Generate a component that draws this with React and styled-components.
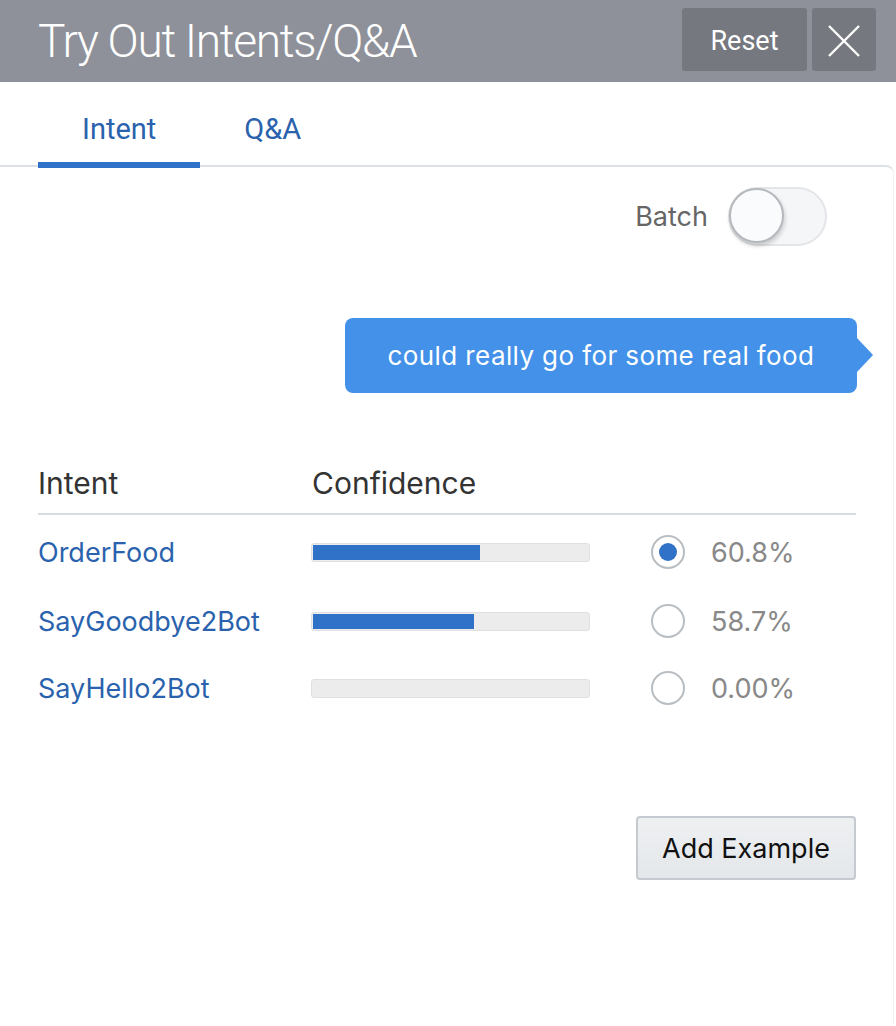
import React from 'react';
import styled, { createGlobalStyle } from 'styled-components';

const GlobalStyle = createGlobalStyle`
  html, body {
    margin: 0;
    padding: 0;
    background: #fff;
  }
  * {
    box-sizing: border-box;
  }
`;

const Page = styled.div`
  width: 896px;
  height: 1026px;
  background: #fff;
  font-family: 'Inter', 'Liberation Sans', sans-serif;
  overflow: hidden;
`;

const Header = styled.header`
  height: 82px;
  background: #8e9199;
  display: flex;
  align-items: flex-start;
  justify-content: space-between;
  padding: 8px 20px 0 38px;
`;

const Title = styled.h1`
  margin: 10px 0 0;
  font-family: 'Roboto', 'Liberation Sans', sans-serif;
  font-weight: 300;
  font-size: 46px;
  letter-spacing: -1.3px;
  color: #fff;
  line-height: 1;
`;

const HeaderActions = styled.div`
  display: flex;
  gap: 5px;
`;

const HeaderButton = styled.button`
  height: 63px;
  width: ${(p) => p.$width}px;
  border: none;
  border-radius: 3px;
  background: #76787f;
  color: #fff;
  font-family: 'Roboto', 'Liberation Sans', sans-serif;
  font-size: 27px;
  display: flex;
  align-items: center;
  justify-content: center;
  padding: 2px 0 0;
`;

const Tabs = styled.nav`
  display: flex;
  padding-left: 38px;
  height: 86px;
  align-items: flex-end;
  position: relative;
  z-index: 1;
`;

const Tab = styled.div`
  padding: 14px 44px 0;
  height: 86px;
  display: flex;
  align-items: center;
  font-family: 'Roboto', 'Liberation Sans', sans-serif;
  font-size: 29px;
  color: #2a62ad;
  border-bottom: 6px solid ${(p) => (p.$active ? '#2f72c8' : 'transparent')};
`;

const Panel = styled.section`
  margin-top: -3px;
  border-top: 2px solid #dde1e6;
  border-right: 1px solid #eef0f2;
  border-top-right-radius: 8px;
  margin-right: 2px;
  padding: 20px 38px 0 38px;
  height: 860px;
`;

const BatchRow = styled.div`
  display: flex;
  justify-content: flex-end;
  align-items: center;
  gap: 20px;
  padding-right: 28px;
`;

const BatchLabel = styled.span`
  font-size: 27px;
  color: #666;
`;

const Toggle = styled.div`
  width: 99px;
  height: 59px;
  border-radius: 30px;
  background: #f5f6f8;
  border: 2px solid #e3e5e8;
  position: relative;
`;

const Knob = styled.div`
  position: absolute;
  left: -1px;
  top: -1px;
  width: 55px;
  height: 55px;
  border-radius: 50%;
  background: #fafbfc;
  border: 2px solid #b5b9bd;
  box-shadow: 1px 3px 4px rgba(0, 0, 0, 0.18);
`;

const BubbleRow = styled.div`
  display: flex;
  justify-content: flex-end;
  margin-top: 72px;
  margin-right: -2px;
`;

const Bubble = styled.div`
  position: relative;
  width: 512px;
  height: 75px;
  border-radius: 8px;
  background: #4391e8;
  color: #fff;
  font-size: 26px;
  letter-spacing: 0.4px;
  display: flex;
  align-items: center;
  justify-content: center;
  &::after {
    content: '';
    position: absolute;
    right: -16px;
    top: 20px;
    border-left: 16px solid #4391e8;
    border-top: 17px solid transparent;
    border-bottom: 17px solid transparent;
  }
`;

const Table = styled.div`
  margin-top: 64px;
  width: 818px;
`;

const HeadRow = styled.div`
  display: grid;
  grid-template-columns: 274px 1fr;
  height: 58px;
  align-items: center;
  border-bottom: 2px solid #d6dbe1;
  font-size: 30px;
  color: #333;
  padding-bottom: 4px;
`;

const Row = styled.div`
  display: grid;
  grid-template-columns: 273px 279px 61px 1fr;
  align-items: center;
  height: ${(p) => p.$h}px;
`;

const IntentName = styled.a`
  font-size: 27px;
  color: #2a62ad;
  text-decoration: none;
`;

const Bar = styled.div`
  height: 19px;
  border-radius: 3px;
  background: #ececec;
  border: 1px solid #e0e0e0;
  padding: 1px;
`;

const Fill = styled.div`
  height: 100%;
  background: #2f72c8;
`;

const Score = styled.div`
  display: flex;
  align-items: center;
`;

const Radio = styled.div`
  width: 34px;
  height: 34px;
  border-radius: 50%;
  border: 2px solid #b9bec3;
  display: flex;
  align-items: center;
  justify-content: center;
  &::after {
    content: '';
    width: 18px;
    height: 18px;
    border-radius: 50%;
    background: ${(p) => (p.$checked ? '#2f72c8' : 'transparent')};
  }
`;

const Percent = styled.span`
  font-size: 27px;
  color: #888;
  margin-left: 26px;
`;

const Footer = styled.div`
  display: flex;
  justify-content: flex-end;
  margin-top: 93px;
  width: 818px;
`;

const AddButton = styled.button`
  width: 220px;
  height: 64px;
  border: 2px solid #c4cad0;
  border-radius: 4px;
  background: linear-gradient(#eef0f2, #e4e7ea);
  font-family: 'Inter', 'Liberation Sans', sans-serif;
  font-size: 27px;
  color: #111;
`;

const rows = [
  { name: 'OrderFood', value: 60.8, label: '60.8%', checked: true, h: 74 },
  { name: 'SayGoodbye2Bot', value: 58.7, label: '58.7%', h: 64 },
  { name: 'SayHello2Bot', value: 0, label: '0.00%', h: 70 },
];

const CloseIcon = () => (
  <svg width="34" height="34" viewBox="0 0 34 34" fill="none" stroke="#fff" strokeWidth="2.4">
    <path d="M2 2 L32 32 M32 2 L2 32" />
  </svg>
);

export default function App() {
  return (
    <Page>
      <GlobalStyle />
      <Header>
        <Title>Try Out Intents/Q&amp;A</Title>
        <HeaderActions>
          <HeaderButton $width={125}>Reset</HeaderButton>
          <HeaderButton $width={64}>
            <CloseIcon />
          </HeaderButton>
        </HeaderActions>
      </Header>
      <Tabs>
        <Tab $active>Intent</Tab>
        <Tab>Q&amp;A</Tab>
      </Tabs>
      <Panel>
        <BatchRow>
          <BatchLabel>Batch</BatchLabel>
          <Toggle>
            <Knob />
          </Toggle>
        </BatchRow>
        <BubbleRow>
          <Bubble>could really go for some real food</Bubble>
        </BubbleRow>
        <Table>
          <HeadRow>
            <span>Intent</span>
            <span>Confidence</span>
          </HeadRow>
          {rows.map((r) => (
            <Row key={r.name} $h={r.h}>
              <IntentName href="#">{r.name}</IntentName>
              <Bar>
                <Fill style={{ width: `${r.value}%` }} />
              </Bar>
              <span />
              <Score>
                <Radio $checked={r.checked} />
                <Percent>{r.label}</Percent>
              </Score>
            </Row>
          ))}
        </Table>
        <Footer>
          <AddButton>Add Example</AddButton>
        </Footer>
      </Panel>
    </Page>
  );
}
